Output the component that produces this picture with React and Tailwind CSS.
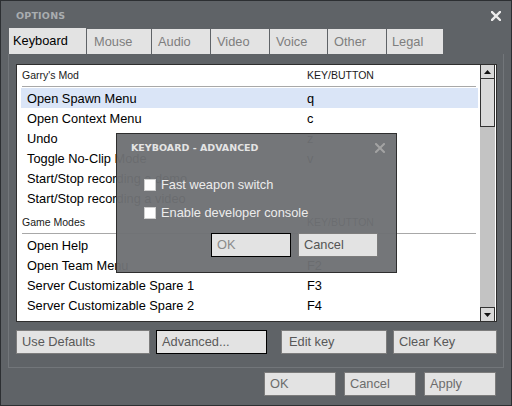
const F = "font-['Liberation_Sans',Arial,sans-serif]";
const B = "font-['DejaVu_Sans',Verdana,sans-serif]";

function Row({ label, k, sel }) {
  return (
    <div className={`flex h-[20px] items-center pt-px text-[12.8px] text-black ${sel ? "bg-[#dae5f7]" : ""}`}>
      <span className="w-[286px] pl-[6px] whitespace-nowrap">{label}</span>
      <span>{k}</span>
    </div>
  );
}

function Btn({ children, w, focus, color = "text-[#5e5e5e]", h = "h-[24px]", pl = "pl-[5px]" }) {
  return (
    <div
      className={`${w} ${h} ${pl} flex items-center bg-[#e3e3e3] border ${focus ? "border-black" : "border-[#7c7c7c]"} ${color} text-[12.8px] whitespace-nowrap`}
    >
      {children}
    </div>
  );
}

function Tab({ children, w, active, pl = "pl-[6px]" }) {
  return (
    <div
      className={`${w} ${pl} flex items-center bg-[#e3e3e3] text-[12.8px] ${active ? "h-[26px] text-black" : "h-[25px] text-[#7e7e7e]"}`}
    >
      {children}
    </div>
  );
}

function X({ color, size = 10, sw = 2.2 }) {
  return (
    <svg width={size} height={size} viewBox="0 0 10 10">
      <path d="M1 1L9 9M9 1L1 9" stroke={color} strokeWidth={sw} strokeLinecap="square" />
    </svg>
  );
}

export default function App() {
  return (
    <div className={`${F} relative w-[512px] h-[406px] bg-[#5f6367] border border-[#2c2f32] flex flex-col`}>
      {/* title */}
      <div className="h-[27px] flex items-center justify-between pl-[15px] pr-[10px] pt-[3px]">
        <span className={`${B} font-bold text-[9.5px] text-[#a9adb0] tracking-[0.2px]`}>OPTIONS</span>
        <X color="#ececec" size={10} sw={2.4} />
      </div>
      {/* tabs */}
      <div className="h-[26px] flex items-end gap-px pl-[8px]">
        <Tab w="w-[77px]" active pl="pl-[4px]">Keyboard</Tab>
        <Tab w="w-[64px]" pl="pl-[7px]">Mouse</Tab>
        <Tab w="w-[58px]">Audio</Tab>
        <Tab w="w-[58px]">Video</Tab>
        <Tab w="w-[57px]">Voice</Tab>
        <Tab w="w-[58px]">Other</Tab>
        <Tab w="w-[56px]" pl="pl-[5px]">Legal</Tab>
      </div>
      {/* panel */}
      <div className="ml-[7px] w-[496px] h-[314px] border border-t-0 border-[#72767a] flex flex-col pl-[7px] pr-[6px] pt-[10px]">
        {/* list */}
        <div className="w-[481px] h-[258px] border border-[#2e2e2e] bg-white flex">
          <div className="flex-1 pl-[4px] pr-[2px] flex flex-col">
            <div className="h-[22px] flex items-end pb-[2px] border-b border-[#a8a8a8] text-[10.5px] text-[#1a1a1a] ml-px mr-[2px]">
              <span className="w-[285px]">Garry's Mod</span>
              <span>KEY/BUTTON</span>
            </div>
            <div className="mt-px">
              <Row label="Open Spawn Menu" k="q" sel />
              <Row label="Open Context Menu" k="c" />
              <Row label="Undo" k="z" />
              <Row label="Toggle No-Clip Mode" k="v" />
              <Row label="Start/Stop recording a demo" k="" />
              <Row label="Start/Stop recording a video" k="" />
            </div>
            <div className="h-[26px] flex items-end pb-[2px] border-b border-[#a8a8a8] text-[10.5px] text-[#1a1a1a] ml-px mr-[2px]">
              <span className="w-[285px]">Game Modes</span>
              <span>KEY/BUTTON</span>
            </div>
            <div className="mt-px">
              <Row label="Open Help" k="F1" />
              <Row label="Open Team Menu" k="F2" />
              <Row label="Server Customizable Spare 1" k="F3" />
              <Row label="Server Customizable Spare 2" k="F4" />
            </div>
          </div>
          {/* scrollbar */}
          <div className="w-[15px] mr-px flex flex-col bg-[#c3c3c3]">
            <div className="h-[14px] bg-[#d8d8d8] border-x border-b border-[#333] flex items-center justify-center">
              <svg width="7" height="4" viewBox="0 0 7 4"><path d="M3.5 0L7 4H0Z" fill="#111" /></svg>
            </div>
            <div className="h-[48px] bg-[#dadada] border-x border-b border-[#333]"></div>
            <div className="flex-1"></div>
            <div className="h-[14px] bg-[#d8d8d8] border-x border-t border-[#333] flex items-center justify-center">
              <svg width="7" height="4" viewBox="0 0 7 4"><path d="M0 0H7L3.5 4Z" fill="#111" /></svg>
            </div>
          </div>
        </div>
        {/* buttons row */}
        <div className="mt-[8px] flex">
          <Btn w="w-[134px]" color="text-[#585858]">Use Defaults</Btn>
          <div className="ml-[6px]">
            <Btn w="w-[111px]" focus color="text-[#5a5a5a]">Advanced...</Btn>
          </div>
          <div className="ml-[14px]">
            <Btn w="w-[106px]" color="text-[#585858]" pl="pl-[7px]">Edit key</Btn>
          </div>
          <div className="ml-[6px]">
            <Btn w="w-[104px]" color="text-[#585858]">Clear Key</Btn>
          </div>
        </div>
      </div>
      {/* bottom buttons */}
      <div className="mt-[4px] flex justify-end gap-[8px] pr-[15px]">
        <Btn w="w-[72px]" color="text-[#6c6c6c]">OK</Btn>
        <Btn w="w-[72px]" color="text-[#6c6c6c]">Cancel</Btn>
        <Btn w="w-[72px]" color="text-[#6c6c6c]">Apply</Btn>
      </div>

      {/* dialog */}
      <div className="absolute left-[115px] top-[132px] w-[281px] h-[140px] border border-[#2e2e2e] bg-[rgba(110,112,116,0.96)] flex flex-col">
        <div className="h-[28px] flex items-center justify-between pl-[14px] pr-[11px]">
          <span className={`${B} font-bold text-[9.5px] text-[#e4e4e4]`}>KEYBOARD - ADVANCED</span>
          <X color="#a3a3a3" size={10} sw={2} />
        </div>
        <div className="mt-[9px] pl-[27px]">
          <div className="h-[28px] flex items-center gap-[5px]">
            <div className="w-[12px] h-[12px] bg-white border border-[#cfcfcf]"></div>
            <span className="text-[12.8px] text-[#ececec]">Fast weapon switch</span>
          </div>
          <div className="h-[28px] flex items-center gap-[5px]">
            <div className="w-[12px] h-[12px] bg-white border border-[#cfcfcf]"></div>
            <span className="text-[12.8px] text-[#ececec]">Enable developer console</span>
          </div>
        </div>
        <div className="mt-[6px] pl-[94px] flex gap-[7px]">
          <Btn w="w-[80px]" focus color="text-[#8a8a8a]">OK</Btn>
          <Btn w="w-[80px]" color="text-[#555]">Cancel</Btn>
        </div>
      </div>
    </div>
  );
}
